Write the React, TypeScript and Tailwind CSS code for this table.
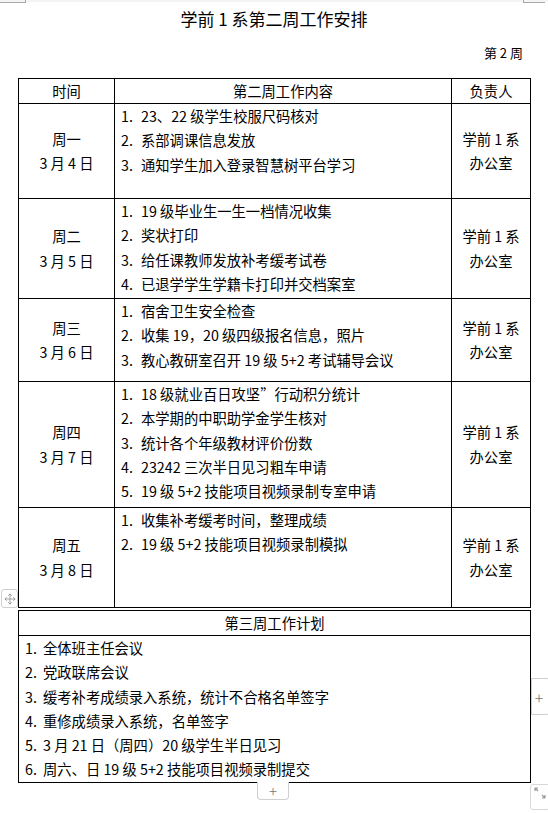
import { Move } from "lucide-react";

type Day = {
  day: string;
  date: string;
  height: string;
  items: string[];
};

const days: Day[] = [
  {
    day: "周一",
    date: "3 月 4 日",
    height: "h-[95px] border-b",
    items: ["23、22 级学生校服尺码核对", "系部调课信息发放", "通知学生加入登录智慧树平台学习"],
  },
  {
    day: "周二",
    date: "3 月 5 日",
    height: "h-[100px] border-b",
    items: [
      "19 级毕业生一生一档情况收集",
      "奖状打印",
      "给任课教师发放补考缓考试卷",
      "已退学学生学籍卡打印并交档案室",
    ],
  },
  {
    day: "周三",
    date: "3 月 6 日",
    height: "h-[83px] border-b",
    items: ["宿舍卫生安全检查", "收集 19，20 级四级报名信息，照片", "教心教研室召开 19 级 5+2 考试辅导会议"],
  },
  {
    day: "周四",
    date: "3 月 7 日",
    height: "h-[126px] border-b",
    items: [
      "18 级就业百日攻坚”行动积分统计",
      "本学期的中职助学金学生核对",
      "统计各个年级教材评价份数",
      "23242 三次半日见习粗车申请",
      "19 级 5+2 技能项目视频录制专室申请",
    ],
  },
  {
    day: "周五",
    date: "3 月 8 日",
    height: "h-[99px]",
    items: ["收集补考缓考时间，整理成绩", "19 级 5+2 技能项目视频录制模拟"],
  },
];

const nextWeek = [
  "全体班主任会议",
  "党政联席会议",
  "缓考补考成绩录入系统，统计不合格名单签字",
  "重修成绩录入系统，名单签字",
  "3 月 21 日（周四）20 级学生半日见习",
  "周六、日 19 级 5+2 技能项目视频录制提交",
];

const Office = () => (
  <div className="flex flex-col items-center justify-center">
    <span>学前 1 系</span>
    <span>办公室</span>
  </div>
);

export default function App() {
  return (
    <div className="relative h-[813px] w-[548px] overflow-hidden bg-white font-['Noto_Sans_CJK_SC',sans-serif] text-[14.3px] leading-[24.3px] text-black">
      {/* page corner marks */}
      <div className="absolute left-0 top-0 h-[2px] w-full bg-[#f4f4f4]" />
      <div className="absolute left-0 top-[2px] h-px w-[26px] bg-[#a8a8a8]" />
      <div className="absolute left-[25px] top-0 h-[3px] w-px bg-[#a8a8a8]" />
      <div className="absolute left-[523px] top-[2px] h-px w-[22px] bg-[#a8a8a8]" />
      <div className="absolute left-[523px] top-0 h-[3px] w-px bg-[#a8a8a8]" />

      <h1 className="flex h-[38px] items-center justify-center text-[17px] font-normal">
        学前 1 系第二周工作安排
      </h1>
      <div className="flex h-[30px] items-center justify-end pr-[25px] text-[13px]">第 2 周</div>

      <div className="ml-[18px] mt-[10px] w-[513px] border border-black">
        <div className="grid h-[25px] grid-cols-[96px_337px_1fr] border-b border-black">
          <div className="flex items-center justify-center border-r border-black">时间</div>
          <div className="flex items-center justify-center border-r border-black">第二周工作内容</div>
          <div className="flex items-center justify-center">负责人</div>
        </div>
        {days.map((d) => (
          <div key={d.day} className={`grid grid-cols-[96px_337px_1fr] border-black ${d.height}`}>
            <div className="flex flex-col items-center justify-center border-r border-black">
              <span>{d.day}</span>
              <span>{d.date}</span>
            </div>
            <div className="border-r border-black pl-[6px]">
              {d.items.map((t, i) => (
                <div key={i} className="flex whitespace-nowrap">
                  <span className="w-[20px] shrink-0">{i + 1}.</span>
                  <span>{t}</span>
                </div>
              ))}
            </div>
            <Office />
          </div>
        ))}
      </div>

      <div className="ml-[18px] mt-[2px] w-[513px] border border-black">
        <div className="flex h-[25px] items-center justify-center border-b border-black">第三周工作计划</div>
        <div className="pl-[6px]">
          {nextWeek.map((t, i) => (
            <div key={i} className="flex whitespace-nowrap">
              <span className="w-[18px] shrink-0">{i + 1}.</span>
              <span>{t}</span>
            </div>
          ))}
        </div>
      </div>

      {/* table editing handles */}
      <div className="absolute left-[1px] top-[589px] flex h-[19px] w-[17px] items-center justify-center rounded-[3px] border border-[#cfcfcf] bg-white text-[#8a8a8a]">
        <Move size={12} strokeWidth={1.5} />
      </div>
      <div className="absolute left-[531px] top-[678px] flex h-[37px] w-[20px] items-center justify-center rounded-r-[4px] border border-[#cfcfcf] bg-white pr-[4px] text-[16px] font-light leading-none text-[#777]">
        +
      </div>
      <div className="absolute left-[257px] top-[782px] flex h-[18px] w-[32px] items-center justify-center rounded-b-[4px] border border-t-0 border-[#cfcfcf] bg-white text-[15px] font-light leading-none text-[#777]">
        +
      </div>
      <div className="absolute left-[530px] top-[784px] h-[26px] w-[20px] rounded-[3px] border border-[#d8d8d8] bg-white">
        <svg width="18" height="24" viewBox="0 0 18 24" className="text-[#9a9a9a]" aria-hidden="true">
          <path d="M4 3l3 3M4 3v3M4 3h3" stroke="currentColor" strokeWidth="1.2" fill="none" />
          <path d="M14 13l-3-3M14 13v-3M14 13h-3" stroke="currentColor" strokeWidth="1.2" fill="none" />
        </svg>
      </div>
    </div>
  );
}
